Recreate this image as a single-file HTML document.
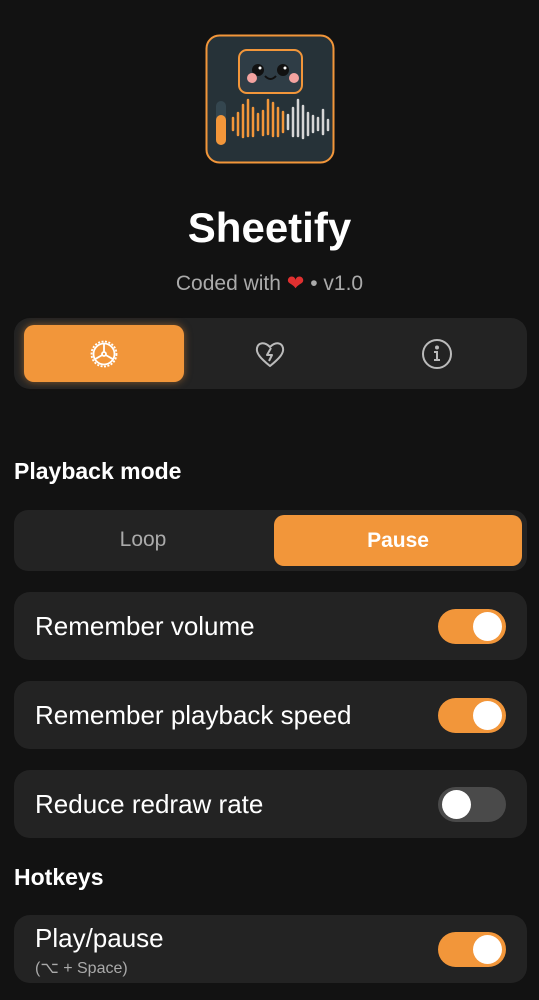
<!DOCTYPE html>
<html><head><style>
body{margin:0;width:539px;height:1000px;background:#121212;font-family:"Liberation Sans",sans-serif;color:#fff;position:relative;overflow:hidden}
.a{position:absolute}
.card{position:absolute;left:14px;width:513px;height:68px;background:#232323;border-radius:16px}
.card .t{position:absolute;left:21px;top:19px;font-size:26px}
.tg{position:absolute;left:424px;top:17px;width:68px;height:35px;border-radius:18px;background:#f2963a}
.tg::after{content:"";position:absolute;right:4px;top:3px;width:29px;height:29px;border-radius:50%;background:#fff}
.tg.off{background:#4a4a4a}
.tg.off::after{right:auto;left:4px}
h3{position:absolute;left:14px;margin:0;font-size:23px;font-weight:bold}
</style></head><body>
<svg class="a" style="left:205px;top:34px" width="130" height="130" viewBox="0 0 130 130">
<rect x="1.5" y="1.5" width="127" height="127" rx="13" fill="#263238" stroke="#f2963a" stroke-width="2"/>
<rect x="34" y="16" width="63" height="43" rx="8" fill="#2f3d46" stroke="#f2963a" stroke-width="2"/>
<circle cx="53" cy="36" r="6" fill="#111"/><circle cx="78" cy="36" r="6" fill="#111"/>
<circle cx="55" cy="34" r="1.5" fill="#fff"/><circle cx="80" cy="34" r="1.5" fill="#fff"/>
<circle cx="47" cy="44" r="5" fill="#f4a3a0"/><circle cx="89" cy="44" r="5" fill="#f4a3a0"/>
<path d="M60 42 q5.5 6 11 0" stroke="#111" stroke-width="2" fill="none"/>
<rect x="11" y="67" width="10" height="44" rx="5" fill="#34464f"/>
<rect x="11" y="81" width="10" height="30" rx="5" fill="#f2963a"/>
<g stroke-width="2.5" stroke-linecap="round">
<g stroke="#f2963a"><path d="M28 84v12M33 79v22M38 71v32M43 66v36M48 74v28M53 80v16M58 77v24M63 66v34M68 69v33M73 74v28M78 78v20"/></g>
<g stroke="#d6d6d6"><path d="M83 81v14M88 74v28M93 66v36M98 72v32M103 79v22M108 82v16M113 84v12M118 76v24M123 86v10"/></g>
</g></svg>
<div class="a" style="left:0;width:539px;top:204px;text-align:center;font-size:42px;font-weight:bold">Sheetify</div>
<div class="a" style="left:0;width:539px;top:271px;text-align:center;font-size:21px;color:#aaa">Coded with <span style="color:#e03030">❤</span> • v1.0</div>
<div class="a" style="left:14px;top:318px;width:513px;height:71px;background:#232323;border-radius:16px"></div>
<div class="a" style="left:24px;top:325px;width:160px;height:57px;background:#f2963a;border-radius:10px;box-shadow:0 0 8px rgba(242,150,58,.5)"></div>
<svg class="a" style="left:88px;top:338px" width="32" height="32" viewBox="0 0 32 32" fill="none" stroke="#fff" stroke-width="1.8"><circle cx="16" cy="16" r="12.5" stroke-dasharray="2 1.5"/><circle cx="16" cy="16" r="10.5"/><circle cx="16" cy="16" r="2"/><path d="M16 14V5.5M14.3 17l-7.5 4.3M17.7 17l7.5 4.3"/></svg>
<svg class="a" style="left:254px;top:338px" width="32" height="32" viewBox="0 0 32 32" fill="none" stroke="#bbb" stroke-width="2" stroke-linejoin="round"><path d="M16 28C6 20 2 15 3 10c1-5 7-7 13-1 6-6 12-4 13 1 1 5-3 10-13 18z"/><path d="M17 10l-4 7h5l-3 6"/></svg>
<svg class="a" style="left:421px;top:338px" width="32" height="32" viewBox="0 0 32 32" fill="none" stroke="#bbb" stroke-width="2"><circle cx="16" cy="16" r="14"/><path d="M13 14h3v8M13 22h6"/><circle cx="16" cy="9.5" r="1" fill="#bbb"/></svg>
<h3 style="top:458px">Playback mode</h3>
<div class="a" style="left:14px;top:510px;width:513px;height:61px;background:#232323;border-radius:14px"></div>
<div class="a" style="left:14px;top:528px;width:258px;text-align:center;font-size:21px;color:#aaa">Loop</div>
<div class="a" style="left:274px;top:515px;width:248px;height:51px;background:#f2963a;border-radius:10px;text-align:center;line-height:51px;font-size:21px;font-weight:bold">Pause</div>
<div class="card" style="top:592px"><div class="t">Remember volume</div><div class="tg"></div></div>
<div class="card" style="top:681px"><div class="t">Remember playback speed</div><div class="tg"></div></div>
<div class="card" style="top:770px"><div class="t">Reduce redraw rate</div><div class="tg off"></div></div>
<h3 style="top:864px">Hotkeys</h3>
<div class="card" style="top:915px"><div class="t" style="top:8px">Play/pause</div><div class="a" style="left:21px;top:43px;font-size:16px;color:#aaa">(⌥ + Space)</div><div class="tg"></div></div>
</body></html>
